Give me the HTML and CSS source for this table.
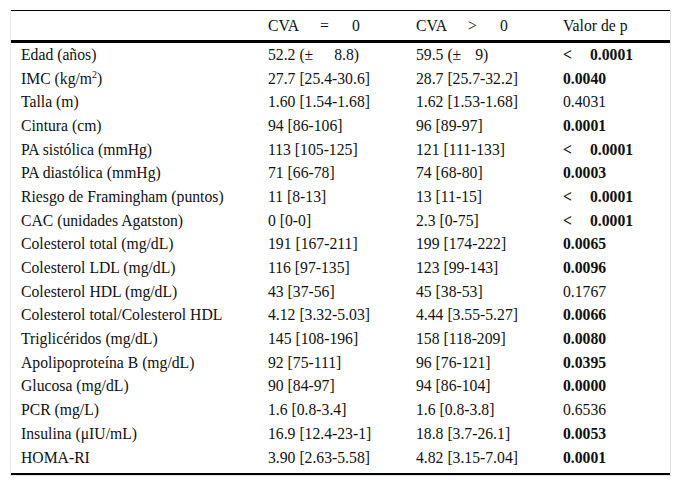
FILE: index.html
```html
<!DOCTYPE html>
<html lang="es">
<head>
<meta charset="utf-8">
<link rel="stylesheet" href="styles.css">
</head>
<body>
<div class="frame">
<div class="rules">
<table class="data">
<thead>
<tr><th></th><th>CVA<span class="sp1"></span>=<span class="sp2"></span>0</th><th>CVA<span class="sp1"></span>&gt;<span class="sp2"></span>0</th><th>Valor de p</th></tr>
</thead>
<tbody>
<tr><td>Edad (años)</td><td>52.2 (±<span class="sp3a"></span>8.8)</td><td>59.5 (±<span class="sp3"></span>9)</td><td class="b">&lt;<span class="sp4"></span>0.0001</td></tr>
<tr><td>IMC (kg/m<sup>2</sup>)</td><td>27.7 [25.4-30.6]</td><td>28.7 [25.7-32.2]</td><td class="b">0.0040</td></tr>
<tr><td>Talla (m)</td><td>1.60 [1.54-1.68]</td><td>1.62 [1.53-1.68]</td><td>0.4031</td></tr>
<tr><td>Cintura (cm)</td><td>94 [86-106]</td><td>96 [89-97]</td><td class="b">0.0001</td></tr>
<tr><td>PA sistólica (mmHg)</td><td>113 [105-125]</td><td>121 [111-133]</td><td class="b">&lt;<span class="sp4"></span>0.0001</td></tr>
<tr><td>PA diastólica (mmHg)</td><td>71 [66-78]</td><td>74 [68-80]</td><td class="b">0.0003</td></tr>
<tr><td>Riesgo de Framingham (puntos)</td><td>11 [8-13]</td><td>13 [11-15]</td><td class="b">&lt;<span class="sp4"></span>0.0001</td></tr>
<tr><td>CAC (unidades Agatston)</td><td>0 [0-0]</td><td>2.3 [0-75]</td><td class="b">&lt;<span class="sp4"></span>0.0001</td></tr>
<tr><td>Colesterol total (mg/dL)</td><td>191 [167-211]</td><td>199 [174-222]</td><td class="b">0.0065</td></tr>
<tr><td>Colesterol LDL (mg/dL)</td><td>116 [97-135]</td><td>123 [99-143]</td><td class="b">0.0096</td></tr>
<tr><td>Colesterol HDL (mg/dL)</td><td>43 [37-56]</td><td>45 [38-53]</td><td>0.1767</td></tr>
<tr><td>Colesterol total/Colesterol HDL</td><td>4.12 [3.32-5.03]</td><td>4.44 [3.55-5.27]</td><td class="b">0.0066</td></tr>
<tr><td>Triglicéridos (mg/dL)</td><td>145 [108-196]</td><td>158 [118-209]</td><td class="b">0.0080</td></tr>
<tr><td>Apolipoproteína B (mg/dL)</td><td>92 [75-111]</td><td>96 [76-121]</td><td class="b">0.0395</td></tr>
<tr><td>Glucosa (mg/dL)</td><td>90 [84-97]</td><td>94 [86-104]</td><td class="b">0.0000</td></tr>
<tr><td>PCR (mg/L)</td><td>1.6 [0.8-3.4]</td><td>1.6 [0.8-3.8]</td><td>0.6536</td></tr>
<tr><td>Insulina (μIU/mL)</td><td>16.9 [12.4-23-1]</td><td>18.8 [3.7-26.1]</td><td class="b">0.0053</td></tr>
<tr><td>HOMA-RI</td><td>3.90 [2.63-5.58]</td><td>4.82 [3.15-7.04]</td><td class="b">0.0001</td></tr>
</tbody>
</table>
</div>
</div>
</body>
</html>
```

FILE: styles.css
```css
html, body {
  margin: 0;
  padding: 0;
  background: #ffffff;
}
body {
  font-family: "Liberation Serif", "Times New Roman", serif;
  font-size: 15.7px;
  color: #111;
}
.frame {
  margin: 10px 0 0 10px;
  width: 661px;
  border-left: 1px solid #e4e4e4;
  border-right: 1px solid #e4e4e4;
  border-bottom: 1px solid #e4e4e4;
  box-sizing: border-box;
}
.rules {
  border-top: 1px solid #000;
  border-bottom: 2px solid #000;
  padding-bottom: 4px;
}
.data {
  width: 659px;
  border-collapse: collapse;
}
.data th {
  font-weight: normal;
  text-align: left;
  height: 29px;
  padding: 0 0 0 10px;
  border-bottom: 3px solid #000;
  vertical-align: middle;
  line-height: 16px;
}
.data td {
  height: 23.7px;
  padding: 0 0 0 10px;
  vertical-align: middle;
  line-height: 16px;
  white-space: nowrap;
}
.data th:nth-child(1), .data td:nth-child(1) { width: 237px; }
.data th:nth-child(2), .data td:nth-child(2) { width: 138px; }
.data th:nth-child(3), .data td:nth-child(3) { width: 137px; }
.data td.b { font-weight: bold; }
sup { font-size: 10px; line-height: 0; vertical-align: 6px; }
.sp1 { display: inline-block; width: 21px; }
.sp2 { display: inline-block; width: 23px; }
.sp3 { display: inline-block; width: 14px; }
.sp3a { display: inline-block; width: 21px; }
.sp4 { display: inline-block; width: 18px; }
```
